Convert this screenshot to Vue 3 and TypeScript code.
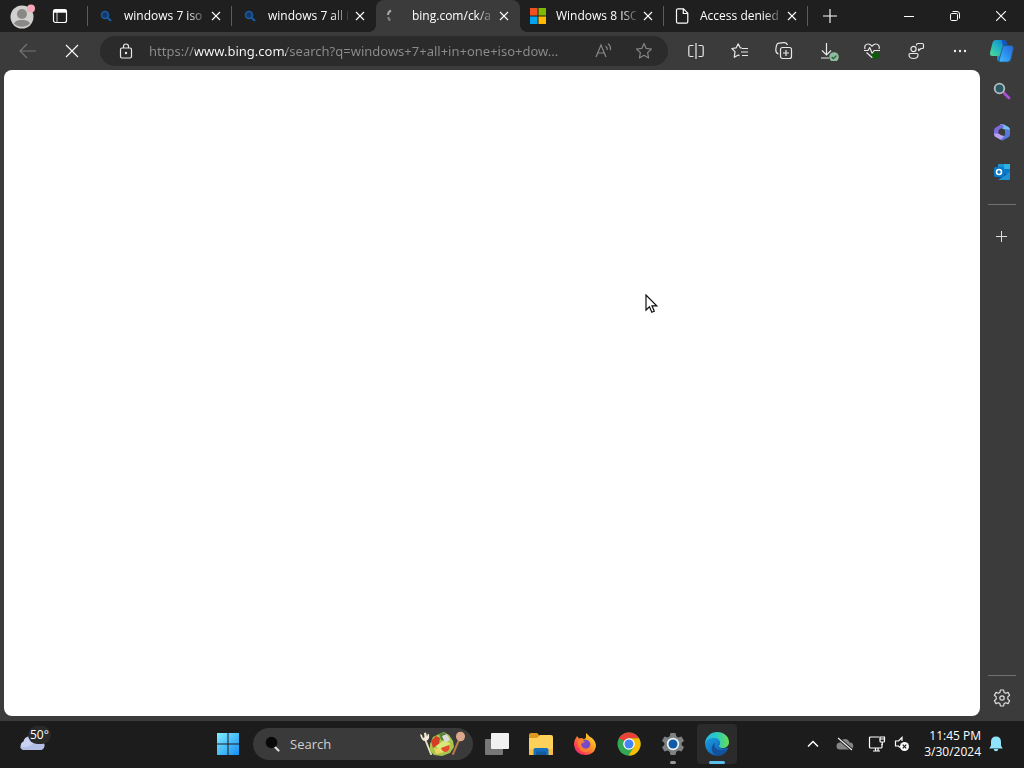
<script setup lang="ts">
import { ref } from 'vue'

interface Tab {
  id: number
  title: string
  icon: 'search' | 'spinner' | 'microsoft' | 'file'
  divider: boolean
}

const tabs: Tab[] = [
  { id: 1, title: 'windows 7 iso', icon: 'search', divider: true },
  { id: 2, title: 'windows 7 all i', icon: 'search', divider: false },
  { id: 3, title: 'bing.com/ck/a', icon: 'spinner', divider: false },
  { id: 4, title: 'Windows 8 ISO', icon: 'microsoft', divider: true },
  { id: 5, title: 'Access denied', icon: 'file', divider: true },
]
const activeTab = ref(3)
const address = ref('https://www.bing.com/search?q=windows+7+all+in+one+iso+dow...')
const query = ref('')
</script>

<template>
  <div class="desktop">
    <div class="browser">
      <header class="tabstrip">
        <div class="profile">
          <button class="plain avatar" aria-label="Profile">
            <svg width="26" height="26" viewBox="0 0 26 26">
              <circle cx="12" cy="14" r="11.500" fill="#d2d0ce" />
              <circle cx="12" cy="11" r="5" fill="#8a8886" />
              <path d="M4 20.500c1.500-3 4.500-3.500 8-3.500s6.500.5 8 3.500a11.500 11.500 0 0 1-16 0z" fill="#8a8886" />
              <circle cx="21" cy="5.500" r="4" fill="#f5a9b8" />
            </svg>
          </button>
          <button class="plain" aria-label="Tab actions">
            <svg width="16" height="16" viewBox="0 0 16 16" fill="none" stroke="#fff" stroke-width="1.200">
              <rect x="1.500" y="1.500" width="13" height="13" rx="2" />
              <path d="M1.500 3.200h13" stroke-width="3" />
              <path d="M5 4v10.500" stroke-width=".8" />
            </svg>
          </button>
        </div>
        <nav class="tabs" aria-label="Open tabs">
          <div
            v-for="tab in tabs"
            :key="tab.id"
            class="tab"
            :class="{ active: tab.id === activeTab, divided: tab.divider }"
          >
            <button class="plain tab-main" @click="activeTab = tab.id">
              <svg v-if="tab.icon === 'search'" class="favicon" viewBox="0 0 16 16" fill="none" stroke="#1a5ca3">
                <circle cx="7" cy="7" r="3.500" fill="#123a68" stroke-width="1.600" />
                <path d="M9.500 9.500l3.500 3.500" stroke-width="2" />
              </svg>
              <svg v-else-if="tab.icon === 'spinner'" class="favicon" viewBox="0 0 16 16" fill="none" stroke="#a8a8a8" stroke-width="2">
                <path d="M5 2.500C3 3.500 2 5 2 7" />
                <path d="M2.200 9c.2 1.500.8 2.600 2 3.500" stroke="#858585" />
              </svg>
              <svg v-else-if="tab.icon === 'microsoft'" class="favicon" viewBox="0 0 16 16">
                <path fill="#f25022" d="M0 0h7.500v7.500H0z" />
                <path fill="#7fba00" d="M8.500 0H16v7.500H8.500z" />
                <path fill="#00a4ef" d="M0 8.500h7.500V16H0z" />
                <path fill="#ffb900" d="M8.500 8.500H16V16H8.500z" />
              </svg>
              <svg v-else class="favicon" viewBox="0 0 16 16" fill="none" stroke="#fff" stroke-width="1.200">
                <path d="M4 .8h5.500l4.300 4.400v8.500q0 1.500-1.500 1.500H4q-1.500 0-1.500-1.500V2.300Q2.500.8 4 .8zM9.300 1v4.500h4.500" />
              </svg>
              <span class="title">{{ tab.title }}</span>
            </button>
            <button class="plain tab-close" aria-label="Close tab">
              <svg width="10" height="10" viewBox="0 0 10 10" stroke="#fff" stroke-width="1.100">
                <path d="M1 1l8 8M9 1l-8 8" />
              </svg>
            </button>
          </div>
        </nav>
        <button class="plain new-tab" aria-label="New tab">
          <svg width="14" height="14" viewBox="0 0 14 14" stroke="#fff" stroke-width="1.100">
            <path d="M7 0v14M0 7h14" />
          </svg>
        </button>
        <div class="window-controls">
          <button class="plain" aria-label="Minimize">
            <svg width="10" height="10" viewBox="0 0 10 10" stroke="#fff"><path d="M0 5.500h10" /></svg>
          </button>
          <button class="plain" aria-label="Restore">
            <svg width="10" height="10" viewBox="0 0 10 10" fill="none" stroke="#fff">
              <rect x=".5" y="2.500" width="7" height="7" rx="1.200" />
              <path d="M2.500.5H7q2.500 0 2.500 2.500v4.500" />
            </svg>
          </button>
          <button class="plain" aria-label="Close">
            <svg width="10" height="10" viewBox="0 0 10 10" stroke="#fff" stroke-width="1.100"><path d="M0 0l10 10M10 0L0 10" /></svg>
          </button>
        </div>
      </header>

      <div class="toolbar">
        <button class="plain tool" aria-label="Back" disabled>
          <svg width="18" height="16" viewBox="0 0 18 16" fill="none" stroke="#777" stroke-width="1.100"><path d="M17 8H1.500M8 1L1 8l7 7" /></svg>
        </button>
        <button class="plain tool" aria-label="Stop">
          <svg width="14" height="14" viewBox="0 0 14 14" stroke="#fff" stroke-width="1.100"><path d="M1 1l12 12M13 1L1 13" /></svg>
        </button>
        <div class="address">
          <button class="plain lock" aria-label="Site information">
            <svg width="14" height="16" viewBox="0 0 14 16" fill="none" stroke="#e8e8e8" stroke-width="1.200">
              <rect x="1.500" y="5" width="11" height="10" rx="1.500" />
              <path d="M4.500 5V3.500a2.500 2.500 0 0 1 5 0V5" />
              <circle cx="7" cy="10" r=".6" fill="#fff" />
            </svg>
          </button>
          <input v-model="address" class="url" type="text" aria-label="Address" spellcheck="false" />
          <button class="plain small-tool" aria-label="Read aloud">
            <svg width="18" height="16" viewBox="0 0 18 16" fill="none" stroke="#898989" stroke-width="1.200">
              <path d="M1 14L6 2l5 12M2.800 10h6.400M10.500 3q2 1.300 1.800 4M13 .8q3 2.200 2.400 6.400" />
            </svg>
          </button>
          <button class="plain small-tool" aria-label="Add to favorites">
            <svg width="18" height="18" viewBox="0 0 18 18" fill="none" stroke="#858585" stroke-width="1.200" stroke-linejoin="round">
              <path d="M9 1.500l2.200 4.900 5.300.6-3.900 3.600 1 5.400L9 13.300 4.400 16l1-5.400L1.500 7l5.300-.6z" />
            </svg>
          </button>
        </div>
        <button class="plain tool" aria-label="Split screen">
          <svg width="18" height="16" viewBox="0 0 18 16" fill="none" stroke="#e8e8e8" stroke-width="1.200">
            <path d="M9 0v16M6.500 2.500H3.300q-1.500 0-1.500 1.500v8q0 1.500 1.500 1.500h3.200M11.500 2.500h3.200q1.500 0 1.500 1.500v8q0 1.500-1.500 1.500h-3.200" />
          </svg>
        </button>
        <button class="plain tool" aria-label="Favorites">
          <svg width="18" height="16" viewBox="0 0 18 16" fill="none" stroke="#e8e8e8" stroke-width="1.200" stroke-linejoin="round">
            <path d="M11 5L9.200 4.800 7.200.8l-2 4-4.400.7L4 8.600l-.7 5.700 4-2.300 1.200.6" />
            <path d="M11 5.500h6M10 9h7M11 12.500h6" />
          </svg>
        </button>
        <button class="plain tool" aria-label="Collections">
          <svg width="18" height="18" viewBox="0 0 18 18" fill="none" stroke="#e8e8e8" stroke-width="1.200">
            <rect x="5.500" y="5.500" width="11" height="11" rx="2" />
            <path d="M11 8v6M8 11h6M3.500 12C1.500 11.500.5 9 1 6l.5-2.500Q2 1.500 4 1.200l5-.6q2.500-.2 3.500 2.400" />
          </svg>
        </button>
        <button class="plain tool" aria-label="Downloads">
          <svg width="22" height="20" viewBox="0 0 22 20" fill="none" stroke="#e8e8e8" stroke-width="1.200">
            <path d="M9.500 2v12M5 9.500L9.500 14 14 9.500M4 17h8" />
            <circle cx="17" cy="16" r="4.800" fill="#8fbc9d" stroke="none" />
            <path d="M14.700 16l1.700 1.700 3-3" stroke="#245b35" />
          </svg>
        </button>
        <button class="plain tool" aria-label="Browser essentials">
          <svg width="18" height="16" viewBox="0 0 18 16" fill="none" stroke="#e8e8e8" stroke-width="1.200" stroke-linejoin="round">
            <path d="M2 6C.8 2.800 3 1 5 1c2 0 3 1 4 2.200C10 2 11 1 13 1c2 0 4.200 1.800 3 5M3.500 9.500L9 14.500l2-1.500M1 7.500h4l1.700-3 2.600 6 1.900-3H17" />
            <circle cx="12.500" cy="12.500" r="3.500" fill="#0b5c0b" stroke="none" />
          </svg>
        </button>
        <button class="plain tool" aria-label="Feedback">
          <svg width="18" height="18" viewBox="0 0 18 18" fill="none" stroke="#e8e8e8" stroke-width="1.200" stroke-linejoin="round">
            <circle cx="6.500" cy="7" r="2.600" />
            <path d="M3 11.500h7q1 0 1 1.200c0 2.600-2 3.800-4.500 3.800S2 15.300 2 12.700q0-1.200 1-1.200z" />
            <path d="M9.500 3.500V2.800q0-1.300 1.300-1.300h4.400q1.300 0 1.300 1.300v2.400q0 1.300-1.300 1.300H14l-2.300 2v-2" />
          </svg>
        </button>
        <button class="plain tool" aria-label="Settings and more">
          <svg width="16" height="4" viewBox="0 0 16 4" fill="#eee"><circle cx="3" cy="2" r="1.200" /><circle cx="8" cy="2" r="1.200" /><circle cx="13" cy="2" r="1.200" /></svg>
        </button>
        <button class="plain copilot" aria-label="Copilot">
          <svg width="26" height="24" viewBox="0 0 26 24">
            <defs>
              <linearGradient id="cpLeft" x1="0" y1="1" x2="1" y2="0"><stop offset="0" stop-color="#55d98e" /><stop offset=".5" stop-color="#20b5c0" /><stop offset="1" stop-color="#127bdc" /></linearGradient>
              <linearGradient id="cpRight" x1="0" y1="1" x2="1" y2="0"><stop offset="0" stop-color="#48bcff" /><stop offset=".5" stop-color="#2c8eee" /><stop offset="1" stop-color="#2864d8" /></linearGradient>
            </defs>
            <path d="M7 1h8q2 0 1.300 2l-3.600 12q-.7 2-2.700 2H3.500Q.5 17 1 13.500L3.500 4Q4.300 1 7 1z" fill="url(#cpLeft)" />
            <path d="M12.500 1H15q2 0 2.700 2l1.300 4h-5z" fill="#1356bc" />
            <path d="M8 17h4.500l-2 6Q8.500 22.500 8 20z" fill="#1c8ecf" />
            <path d="M16 6.500h6q3 0 2.400 3.500L22 20q-.8 3-3.500 3h-7q-2 0-1.300-2l3.300-12.500q.6-2 2.500-2z" fill="url(#cpRight)" stroke="#2a5670" stroke-width=".8" />
          </svg>
        </button>
      </div>

      <div class="workspace">
        <main class="page"></main>
        <aside class="sidebar">
          <button class="plain side-item" aria-label="Search">
            <svg width="18" height="18" viewBox="0 0 18 18" fill="none">
              <path d="M11 11l5 5" stroke="#b14bd8" stroke-width="2.800" stroke-linecap="round" />
              <circle cx="6.500" cy="6.500" r="4.800" fill="#285b66" stroke="#b9bcbd" stroke-width="1.800" />
            </svg>
          </button>
          <button class="plain side-item" aria-label="Microsoft 365">
            <svg width="18" height="18" viewBox="0 0 18 18">
              <path d="M7 1.500Q9 .3 11 1.500l4.500 2.500Q17 5 17 7v3l-5-1.500V6.800L6.500 4z" fill="#75bff2" />
              <path d="M9 1L3 4.200Q1 5.300 1 7.500V12l4.500 1V8q0-1.500 1.500-2l4-1.800z" fill="#7c6bdc" />
              <path d="M1 10.500l5 .3 4 2 2 .2-2 4q-1 .5-2.500-.2L2.500 14Q1 13 1 10.500z" fill="#bba0f2" />
              <path d="M17 7v4.500q0 2-2 3L10.500 17q-1.500.6-3-.2l3.500-3.400q1-1 1-2.400V6z" fill="#5578dc" />
              <path d="M6 8l3-2 3 1.800v2.800L9 12.500 6 10.800z" fill="#3b3b3b" />
            </svg>
          </button>
          <button class="plain side-item" aria-label="Outlook">
            <svg width="18" height="18" viewBox="0 0 18 18">
              <path fill="#0a4f91" d="M5 1h12v14H5z" />
              <path fill="#1e91d4" d="M5 1h6v5H5z" />
              <path fill="#2eb2e6" d="M11 1h6v5h-6z" />
              <path fill="#0a78c8" d="M11 6h6v5h-6z" />
              <path fill="#1c91d3" d="M5 17L17 9v6.500q0 1.500-1.500 1.500z" />
              <rect x="1" y="4" width="10" height="10" rx="1.500" fill="#0878c8" />
              <circle cx="6" cy="9" r="2.500" fill="none" stroke="#fff" stroke-width="1.500" />
            </svg>
          </button>
          <hr class="side-line" />
          <button class="plain side-item add" aria-label="Customize">
            <svg width="12" height="12" viewBox="0 0 12 12" stroke="#ddd"><path d="M5.500 0v11M0 5.500h11" /></svg>
          </button>
          <hr class="side-line bottom" />
          <button class="plain side-gear" aria-label="Sidebar settings">
            <svg width="18" height="18" viewBox="0 0 18 18" fill="none" stroke="#e0e0e0" stroke-width="1.200" stroke-linejoin="round">
              <path d="M7.400 1h3.200l.5 2.400 1.600.9 2.300-.9 1.600 2.800-1.800 1.700v2.200l1.800 1.700-1.600 2.800-2.300-.9-1.600.9-.5 2.400H7.400l-.5-2.400-1.600-.9-2.300.9-1.600-2.800 1.800-1.700V7.900L1.400 6.200 3 3.400l2.300.9 1.600-.9z" />
              <circle cx="9" cy="9" r="2.200" />
            </svg>
          </button>
        </aside>
      </div>
    </div>

    <footer class="taskbar">
      <button class="plain weather" aria-label="Weather">
        <svg width="26" height="18" viewBox="0 0 26 18">
          <path d="M5 15a4.500 4.500 0 0 1-.5-8.500C5 4 7 1.500 10 1.500c4 0 5.500 2 6.500 4.500H21a4.500 4.500 0 0 1 0 9z" fill="#c9d3f1" />
          <path d="M1 11.500q6 2 10-1 4-3 9-1.500h5A4.500 4.500 0 0 1 21 15H5a4.500 4.500 0 0 1-4-3.500z" fill="#b4bfe6" />
        </svg>
        <span class="temperature">50°</span>
      </button>
      <div class="apps">
        <button class="plain app" aria-label="Start">
          <svg width="24" height="24" viewBox="0 0 24 24">
            <defs><linearGradient id="win" x1="0" y1="0" x2="1" y2="1"><stop offset="0" stop-color="#80edff" /><stop offset="1" stop-color="#168df2" /></linearGradient></defs>
            <path d="M1 1h10.500v10.500H1zM12.500 1H23v10.500H12.500zM1 12.500h10.500V23H1zM12.500 12.500H23V23H12.500z" fill="url(#win)" />
          </svg>
        </button>
        <label class="search">
          <svg width="16" height="16" viewBox="0 0 16 16">
            <path d="M9 10l4.500 4.500" stroke="#ddd" stroke-width="2.200" stroke-linecap="round" />
            <circle cx="6.500" cy="6.500" r="5.800" fill="#080808" />
          </svg>
          <input v-model="query" type="text" placeholder="Search" aria-label="Search" />
          <svg width="48" height="26" viewBox="0 0 48 26">
            <path d="M6 8l6 15" stroke="#eadfc8" stroke-width="2" stroke-linecap="round" />
            <path d="M1 3l2 1 1 3 1.500-.8L5 2l2-.5 1 4 1-3 1 1q1 5-3 6.500Q2.500 11 1 3z" fill="#f4ead6" />
            <path d="M40 9l-6 14" stroke="#b97849" stroke-width="2" stroke-linecap="round" />
            <ellipse cx="41.500" cy="5.500" rx="4.500" ry="4.800" fill="#dda889" />
            <path d="M11 13l3-7 6-3 5-2 5 3 4 6 1 6-4 6-8 3-8-1-4-4z" fill="#a8c64b" />
            <path d="M20 3l4-2 5 3-2 6-5-1z" fill="#59833b" />
            <path d="M23 5l5-2 3 6-5 3z" fill="#d9dedb" />
            <path d="M12 10l5-5 4 2-1 6-6 4z" fill="#d63d25" />
            <path d="M17 15l7-5 7 2-2 7-7 3z" fill="#dce779" />
            <path d="M22 17l8-3q2 5-3 7-4 0-5-4z" fill="#e64d2e" />
            <path d="M15 17l5 1 2 4-5 1z" fill="#f1d35a" />
          </svg>
        </label>
        <button class="plain app" aria-label="Task view">
          <svg width="26" height="24" viewBox="0 0 26 24"><rect x="1" y="7" width="18" height="16" rx="1" fill="#777" /><rect x="7" y="1" width="18" height="16" rx="1" fill="#f0f0f0" /></svg>
        </button>
        <button class="plain app" aria-label="File Explorer">
          <svg width="26" height="24" viewBox="0 0 26 24">
            <path d="M1 3q0-2 2-2h6l3 3v4H1z" fill="#dd9820" />
            <path d="M1 6h8l3-3h11q2 0 2 2v17q0 1-1 1H2q-1 0-1-1z" fill="#ffd15a" />
            <path d="M1 17h24v5q0 1-1 1H2q-1 0-1-1z" fill="#f6c04a" />
            <path d="M5.500 23v-5q0-2 2-2h11q2 0 2 2v5z" fill="#1670bd" />
            <path d="M8 19.500h10V23H8z" fill="#135a9e" />
          </svg>
        </button>
        <button class="plain app" aria-label="Firefox">
          <svg width="24" height="24" viewBox="0 0 24 24">
            <defs><linearGradient id="fox" x1="1" y1="0" x2="0" y2="1"><stop offset="0" stop-color="#fff14a" /><stop offset=".4" stop-color="#ff9b22" /><stop offset=".75" stop-color="#ff3e54" /><stop offset="1" stop-color="#d7168d" /></linearGradient></defs>
            <path d="M4 4l2 2.500L9 6l2 1.500 2-2V1q2 1.500 3.500 3.500L19 6q4.500 4 3.800 9Q21 23 12 23 2 22.500 1 13q0-5 2-7z" fill="url(#fox)" />
            <circle cx="12.500" cy="12.500" r="4.800" fill="#754bc8" />
            <path d="M5 9q4-2 7 .5l-1.500 1.500-2.500 1q1.500 5 5.500 4.500 3.500-.5 4-4.500 1.500 3-.5 6-3.500 3.500-8 1.500Q4 16 5 9z" fill="#ff8a29" opacity=".75" />
          </svg>
        </button>
        <button class="plain app" aria-label="Chrome">
          <svg width="24" height="24" viewBox="0 0 24 24">
            <circle cx="12" cy="12" r="11.500" fill="#34a853" />
            <path d="M12 12L2 6.200A11.500 11.500 0 0 1 22 6.200H12z" fill="#ea4335" />
            <path d="M12 6.200h10a11.500 11.500 0 0 1-10.500 17.300L17 15z" fill="#fbbc05" />
            <path d="M2 6.200L7 15l5-3z" fill="#34a853" />
            <circle cx="12" cy="12" r="5.800" fill="#fff" /><circle cx="12" cy="12" r="4.500" fill="#4285f4" />
          </svg>
        </button>
        <button class="plain app running" aria-label="Settings">
          <svg width="24" height="24" viewBox="0 0 24 24">
            <path d="M9.500 1h5l.8 3.300 2 1.100L20.500 4.500 23 8.800l-2.400 2.300v1.800l2.400 2.300-2.500 4.300-3.200-.9-2 1.100-.8 3.300h-5l-.8-3.300-2-1.100-3.200.9L1 15.200l2.400-2.300v-1.800L1 8.800l2.500-4.300 3.200.9 2-1.100z" fill="#7d8287" />
            <circle cx="12" cy="12" r="6.200" fill="#f2f2f2" /><circle cx="12" cy="12" r="4.500" fill="#0d5ca5" />
          </svg>
        </button>
        <button class="plain app current" aria-label="Microsoft Edge">
          <svg width="26" height="26" viewBox="0 0 26 26">
            <defs>
              <linearGradient id="edgeTop" x1="0" y1="0" x2="1" y2="0"><stop offset="0" stop-color="#29b5e8" /><stop offset=".5" stop-color="#2bc9c2" /><stop offset="1" stop-color="#69e04e" /></linearGradient>
              <linearGradient id="edgeBody" x1="0" y1="0" x2="1" y2="1"><stop offset="0" stop-color="#189ee0" /><stop offset="1" stop-color="#1054ad" /></linearGradient>
            </defs>
            <path d="M1 12A12 12 0 0 1 13 1c7 0 12 4.500 12 10 0 4-3 6-6.500 6-3 0-4.500-1-3.500-2.500 2-3-.5-6-4-6-4 0-8 1.500-10 5z" fill="url(#edgeTop)" />
            <path d="M1 13C2 9 6 7 10 7c4 0 6.500 2.500 6 5.500-.4 1.500-1.500 2-1.200 3 .5 2 4.700 2.500 8.200 1.300q1.500-.3.500 1.500A12 12 0 0 1 1 13z" fill="url(#edgeBody)" />
            <path d="M11 11.500C5 16 8 24 14 25A12 12 0 0 0 23.500 19q.5-1-.5-.7c-6 2.200-12 1-12.500-4q0-1.500.5-2.800z" fill="#12529b" />
          </svg>
        </button>
      </div>
      <div class="tray">
        <button class="plain tray-icon" aria-label="Show hidden icons">
          <svg width="12" height="8" viewBox="0 0 12 8" fill="none" stroke="#fff" stroke-width="1.500"><path d="M1 6.500l5-5 5 5" /></svg>
        </button>
        <button class="plain tray-icon" aria-label="OneDrive">
          <svg width="18" height="14" viewBox="0 0 18 14">
            <path d="M4 12.500a3.500 3.500 0 0 1 0-7C5 2.500 7 2 9 2c3 0 4 2 4.500 3.500a3.500 3.500 0 0 1 .5 7z" fill="#858585" />
            <path d="M2 1l14 12" stroke="#1c1c1c" stroke-width="3" /><path d="M2 1l14 12" stroke="#eee" stroke-width="1.200" />
          </svg>
        </button>
        <button class="plain tray-icon" aria-label="Network">
          <svg width="18" height="18" viewBox="0 0 18 18" fill="none" stroke="#fff" stroke-width="1.200">
            <path d="M11 2H2.500Q1.500 2 1.500 3v9q0 1 1 1H13q1 0 1-1V9M5 16h7M7.500 13v3M10 13v3" />
            <path d="M12 2h4.500v4q0 1-1 1H13q-1 0-1-1zM12 4h4.500M14.200 7v3" />
          </svg>
        </button>
        <button class="plain speaker" aria-label="Volume">
          <svg width="16" height="16" viewBox="0 0 16 16" fill="none" stroke="#fff" stroke-width="1.200">
            <path d="M8 5V1.500L4.500 5H1.500v5h3L6 11.500" />
            <circle cx="10.500" cy="10.500" r="4.500" fill="#fff" stroke="none" /><path d="M8.700 8.700l3.600 3.600M12.300 8.700l-3.600 3.600" stroke="#1c1c1c" />
          </svg>
        </button>
        <button class="plain clock"><span>11:45 PM</span><span>3/30/2024</span></button>
        <button class="plain bell" aria-label="Notifications">
          <svg width="14" height="16" viewBox="0 0 14 16" fill="#8fe3fa"><path d="M7 .5q5 0 5 5.500v3.500l1.700 3H.3l1.700-3V6Q2 .5 7 .5zM4.800 13h4.400q0 2.300-2.200 2.300T4.800 13z" /></svg>
        </button>
      </div>
    </footer>

    <svg class="pointer" width="13" height="20" viewBox="0 0 13 20">
      <path d="M1 1v15l3.500-3.300 2.300 5.500 2.500-1-2.300-5.400h4.700z" fill="#fff" stroke="#111" stroke-width="1.200" />
    </svg>
  </div>
</template>

<style>
body {
  margin: 0;
  background: #1c1c1c;
}
</style>

<style scoped>
.desktop {
  position: relative;
  display: flex;
  flex-direction: column;
  min-height: 100vh;
  font-family: "Open Sans", "Noto Sans", sans-serif;
  font-size: 12px;
  color: #fff;
  background: #1c1c1c;
}
svg {
  display: block;
  flex: none;
}
.plain {
  display: flex;
  align-items: center;
  justify-content: center;
  padding: 0;
  border: 0;
  background: none;
  color: inherit;
  font: inherit;
}
.browser {
  flex: 1;
  display: flex;
  flex-direction: column;
  background: #3b3b3b;
}
.tabstrip {
  display: flex;
  height: 32px;
  background: #1f1f1f;
}
.profile {
  display: flex;
  align-items: center;
  gap: 16px;
  width: 77px;
  padding-left: 10px;
  border-right: 1px solid #5c5c5c;
  height: 20px;
  margin: 6px 0;
  box-sizing: content-box;
}
.tabs {
  display: flex;
}
.tab {
  position: relative;
  display: flex;
  align-items: center;
  width: 144px;
}
.tab.divided::after {
  content: "";
  position: absolute;
  right: 0;
  top: 6px;
  width: 1px;
  height: 20px;
  background: #5c5c5c;
}
.tab.active {
  background: #3b3b3b;
  border-radius: 8px 8px 0 0;
}
.tab.active::before,
.tab.active::after {
  content: "";
  position: absolute;
  bottom: 0;
  width: 8px;
  height: 8px;
}
.tab.active::before {
  left: -8px;
  background: radial-gradient(circle at 0 0, transparent 8px, #3b3b3b 8px);
}
.tab.active::after {
  right: -8px;
  background: radial-gradient(circle at 100% 0, transparent 8px, #3b3b3b 8px);
}
.tab-main {
  flex: 1;
  min-width: 0;
  height: 32px;
  padding-left: 10px;
  gap: 10px;
  justify-content: flex-start;
}
.favicon {
  width: 16px;
  height: 16px;
}
.title {
  flex: 1;
  overflow: hidden;
  white-space: nowrap;
  text-align: left;
  line-height: 16px;
  mask-image: linear-gradient(to right, #000 80%, rgba(0, 0, 0, 0.2));
}
.tab-close {
  width: 24px;
  height: 32px;
  margin-right: 4px;
}
.new-tab {
  width: 44px;
}
.window-controls {
  display: flex;
  margin-left: auto;
}
.window-controls .plain {
  width: 46px;
}
.toolbar {
  display: flex;
  align-items: center;
  height: 38px;
  padding-left: 6px;
}
.tool {
  width: 44px;
  height: 30px;
}
.address {
  flex: 1;
  min-width: 0;
  display: flex;
  align-items: center;
  height: 30px;
  margin: 0 6px;
  padding-left: 16px;
  padding-right: 4px;
  box-sizing: border-box;
  border-radius: 15px;
  background: #2b2b2b;
}
.lock {
  width: 20px;
}
.url {
  flex: 1;
  min-width: 0;
  height: 24px;
  margin-left: 13px;
  padding: 0;
  border: 0;
  outline: 0;
  font: 13px/24px "Noto Sans", "Open Sans", sans-serif;
  color: transparent;
  background: linear-gradient(to right, #8c8c8c 46px, #fff 46px, #fff 137px, #8c8c8c 137px);
  background-clip: text;
  text-overflow: ellipsis;
}
.small-tool {
  width: 40px;
  height: 30px;
}
.copilot {
  width: 42px;
  padding-right: 2px;
  box-sizing: border-box;
}
.workspace {
  flex: 1;
  display: flex;
}
.page {
  flex: 1;
  margin: 0 0 5px 4px;
  border-radius: 8px;
  background: #fff;
}
.sidebar {
  display: flex;
  flex-direction: column;
  align-items: center;
  width: 44px;
}
.side-item {
  width: 40px;
  height: 40px;
}
.side-item:first-child {
  height: 42px;
}
.side-line {
  width: 28px;
  height: 1px;
  margin: 12px 0;
  border: 0;
  background: #707070;
}
.side-line.bottom {
  margin: auto 0 4px;
}
.side-gear {
  width: 40px;
  height: 36px;
  margin-bottom: 5px;
}
.taskbar {
  display: flex;
  align-items: center;
  height: 47px;
  padding-bottom: 1px;
  box-sizing: border-box;
  background: #1c1c1c;
}
.weather {
  position: relative;
  width: 64px;
  height: 46px;
  margin-right: 144px;
}
.temperature {
  position: absolute;
  left: 28px;
  top: 5px;
  padding: 0 2px;
  border-radius: 9px;
  background: #2a2a2a;
  line-height: 18px;
}
.apps {
  display: flex;
  align-items: center;
  gap: 4px;
}
.app {
  position: relative;
  width: 40px;
  height: 40px;
  border-radius: 4px;
}
.current {
  background: #2b2b2b;
}
.running::after,
.current::after {
  content: "";
  position: absolute;
  bottom: 0;
  width: 6px;
  height: 3px;
  border-radius: 2px;
  background: #9a9a9a;
}
.current::after {
  width: 16px;
  background: #5bbdea;
}
.search {
  display: flex;
  align-items: center;
  width: 220px;
  height: 32px;
  margin-left: 1px;
  padding: 0 6px 0 12px;
  box-sizing: border-box;
  border-radius: 16px;
  background: #3a3a3a;
}
.search input {
  flex: 1;
  min-width: 0;
  padding: 0;
  margin-left: 9px;
  border: 0;
  outline: 0;
  background: none;
  color: #fff;
  font: 13px/20px "Open Sans", "Noto Sans", sans-serif;
}
.search input::placeholder {
  color: #d0d0d0;
}
.tray {
  display: flex;
  align-items: center;
  margin-left: auto;
  padding-right: 21px;
}
.tray-icon {
  width: 32px;
  height: 40px;
}
.speaker {
  width: 18px;
  height: 40px;
}
.clock {
  flex-direction: column;
  align-items: flex-end;
  width: 70px;
  line-height: 16px;
}
.bell {
  width: 14px;
  margin-left: 8px;
}
.pointer {
  position: absolute;
  left: 645px;
  top: 294px;
}
</style>
